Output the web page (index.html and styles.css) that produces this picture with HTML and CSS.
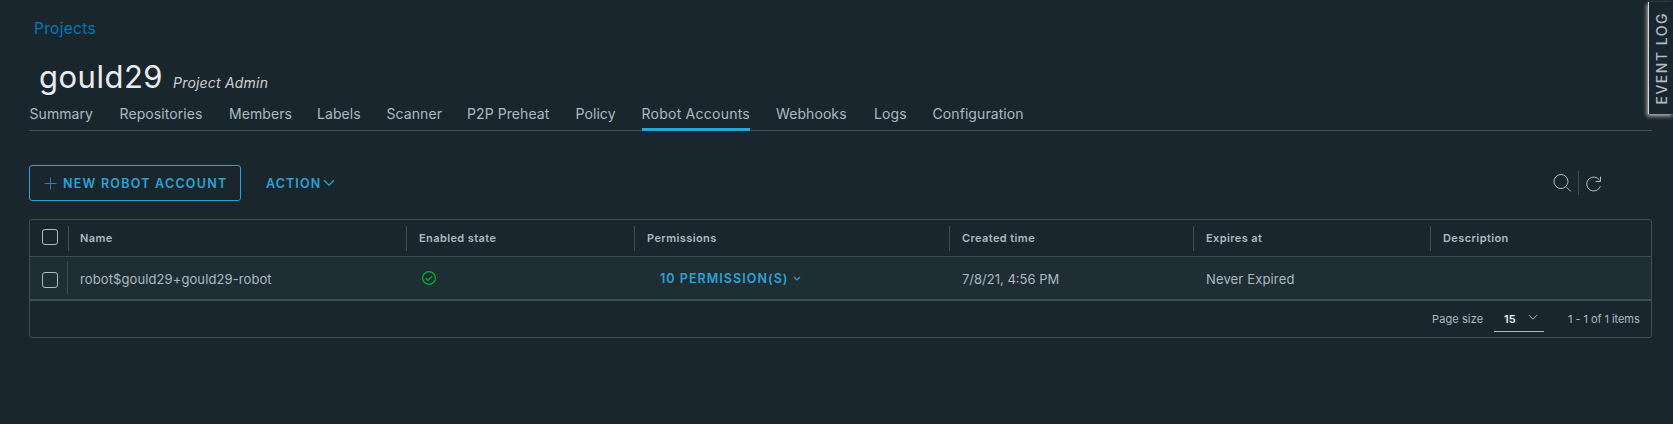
FILE: index.html
```html
<!DOCTYPE html>
<html lang="en">
<head>
<meta charset="utf-8">
<title>gould29 - Robot Accounts</title>
<link rel="stylesheet" href="styles.css">
</head>
<body>
<main class="page">
  <a class="crumb">Projects</a>
  <header class="title"><h1 class="name">gould29</h1><em class="role">Project Admin</em></header>
  <nav class="tabs">
    <a class="tab">Summary</a><a class="tab">Repositories</a><a class="tab">Members</a><a class="tab">Labels</a><a class="tab">Scanner</a><a class="tab">P2P Preheat</a><a class="tab">Policy</a><a class="tab active">Robot Accounts</a><a class="tab">Webhooks</a><a class="tab">Logs</a><a class="tab">Configuration</a>
  </nav>
  <div class="toolbar">
    <button class="btn new"><svg width="13" height="13" viewBox="0 0 13 13"><path d="M6.5 .5v12M.5 6.5h12"/></svg><span>NEW ROBOT ACCOUNT</span></button>
    <button class="btn action"><span>ACTION</span><svg width="12" height="8" viewBox="0 0 12 8"><path d="M1 1.2l5 5 5-5"/></svg></button>
    <div class="tools">
      <svg width="19" height="20" viewBox="0 0 19 20"><circle cx="8" cy="8.5" r="7"/><path d="M13.4 14.1l4.4 4.4"/></svg>
      <i class="divider"></i>
      <svg width="16" height="17" viewBox="0 0 16 17"><path d="M14.4 11.2A7 7 0 1 1 13.6 5.2M14.5 1.6v4.9H9.6"/></svg>
    </div>
  </div>
  <section class="grid">
    <div class="row head">
      <div class="pick"><i class="box"></i></div>
      <div class="cell">Name</div><div class="cell">Enabled state</div><div class="cell">Permissions</div><div class="cell">Created time</div><div class="cell">Expires at</div><div class="cell">Description</div>
    </div>
    <div class="row body">
      <div class="pick"><i class="box"></i></div>
      <div class="cell robot">robot$gould29+gould29-robot</div>
      <div class="cell state"><svg width="16" height="16" viewBox="0 0 16 16"><circle cx="8" cy="8" r="6.4"/><path d="M4.7 8.3l2.3 2.2 4.3-4.3"/></svg></div>
      <div class="cell perms"><span>10 PERMISSION(S)</span><svg width="8" height="6" viewBox="0 0 8 6"><path d="M1 1l3 3 3-3"/></svg></div>
      <div class="cell time">7/8/21, 4:56 PM</div><div class="cell never">Never Expired</div><div class="cell"></div>
    </div>
    <footer class="foot">
      <span class="size">Page size</span>
      <span class="select"><b>15</b><svg width="10" height="7" viewBox="0 0 10 7"><path d="M1 1.2l4 4 4-4"/></svg></span>
      <span class="items">1 - 1 of 1 items</span>
    </footer>
  </section>
</main>
<aside class="log"><span>EVENT LOG</span></aside>
</body>
</html>
```

FILE: styles.css
```css
* { box-sizing: border-box; }
body {
  margin: 0; height: 424px; overflow: hidden;
  background: #1a262d; color: #acbac3;
  font-family: Inter, "Liberation Sans", sans-serif;
}
svg { display: block; fill: none; stroke: currentColor; flex: none; }
.page { padding: 17px 21px 0 29px; display: flex; flex-direction: column; }
.crumb { height: 24px; line-height: 24px; margin-left: 5px; font-size: 15.5px; color: #0079b8; letter-spacing: .3px; }
.title { display: flex; align-items: baseline; height: 40px; margin-top: 16px; padding-left: 10px; line-height: 40px; }
.name { margin: 0; font-size: 31px; font-weight: 400; letter-spacing: .5px; color: #eaedf0; width: 134px; }
.role { font-size: 14px; letter-spacing: .2px; color: #d0d0d0; }
.tabs {
  display: grid; height: 34px; border-bottom: 1px solid #3f4d56;
  grid-template-columns: 90px 109.5px 88px 69.5px 80.5px 108.5px 66px 134.5px 98px 58.5px 110px;
  padding-left: .5px; white-space: nowrap; font-size: 14px; line-height: 33px; letter-spacing: .08px;
}
.tab { height: 34px; justify-self: start; }
.active { border-bottom: 3px solid #29a5d3; letter-spacing: .24px; }
.toolbar { display: flex; align-items: center; height: 36px; margin-top: 34px; }
.btn {
  display: flex; align-items: center; padding: 0; border: 0; background: none; color: #2ba3d4;
  font: 600 12.5px Inter, sans-serif; letter-spacing: 1.25px; white-space: nowrap; height: 36px;
}
.btn span { position: relative; top: .5px; }
.new { width: 212px; border: 1px solid #2ba3d4; border-radius: 3px; padding-left: 14px; gap: 6px; }
.new svg { opacity: .75; }
.action { margin-left: 25px; gap: 2px; letter-spacing: 1.1px; }
.action svg { stroke-width: 1.3; }
.tools { display: flex; align-items: center; margin-left: auto; margin-right: 50px; }
.divider { width: 1px; height: 24px; background: #3f4d56; margin: 0 7px 0 6px; }
.grid { margin-top: 18px; height: 119px; border: 1px solid #3f4d56; border-radius: 3px; overflow: hidden; }
.row { display: grid; grid-template-columns: 38px 338px 228px 315px 244px 237px 1fr; align-items: center; white-space: nowrap; }
.head { height: 37px; border-bottom: 1px solid #3f4d56; font-size: 11px; font-weight: 600; letter-spacing: .4px; }
.head .cell { height: 25px; border-left: 1px solid #3f4d56; padding-left: 12px; line-height: 25px; }
.head .cell:nth-child(2) { padding-left: 11px; }
.body { height: 44px; background: #1f2d34; border-bottom: 2px solid #3f4d56; font-size: 13px; }
.body .cell { padding-left: 13px; padding-top: 1px; }
.body .robot { padding-left: 12px; letter-spacing: .1px; }
.body .never { letter-spacing: .15px; }
.pick { padding-left: 12px; }
.body .pick { height: 32px; border-right: 1px solid #3f4d56; width: 38px; padding-top: 10px; }
.box { display: block; width: 16px; height: 16px; border: 1px solid #acbac3; border-radius: 3px; }
.head .box { margin-top: -3px; }
.body .state { color: #00b52c; padding: 0 0 0 15px; stroke-width: 1.2; }
.body .perms { display: flex; align-items: center; gap: 4px; padding-left: 26px; color: #2ba3d4; font-weight: 600; font-size: 12.5px; letter-spacing: 1.05px; }
.perms svg { stroke-width: 1.2; }
.foot { display: flex; justify-content: flex-end; height: 36px; padding-right: 12px; align-items: center; font-size: 11px; white-space: nowrap; }
.size { width: 62px; letter-spacing: .1px; }
.select { display: flex; align-items: center; width: 50px; height: 26px; border-bottom: 1px solid #acbac3; padding: 0 6px 0 10px; justify-content: space-between; color: #eaedf0; }
.select b { font-weight: 600; }
.select svg { color: #acbac3; margin-top: -3px; }
.items { width: 71px; margin-left: 24px; letter-spacing: -.06px; }
.log {
  position: absolute; right: 0; top: 2px; width: 25px; height: 112px;
  border-left: 1px solid #d5d5d5; box-shadow: -1px 2px 4px #b9b9b9; background: #1a262d;
  display: flex; align-items: center; justify-content: center;
}
.log span { writing-mode: vertical-rl; transform: rotate(180deg); font-size: 14px; font-weight: 500; letter-spacing: 1.5px; white-space: nowrap; }
```
